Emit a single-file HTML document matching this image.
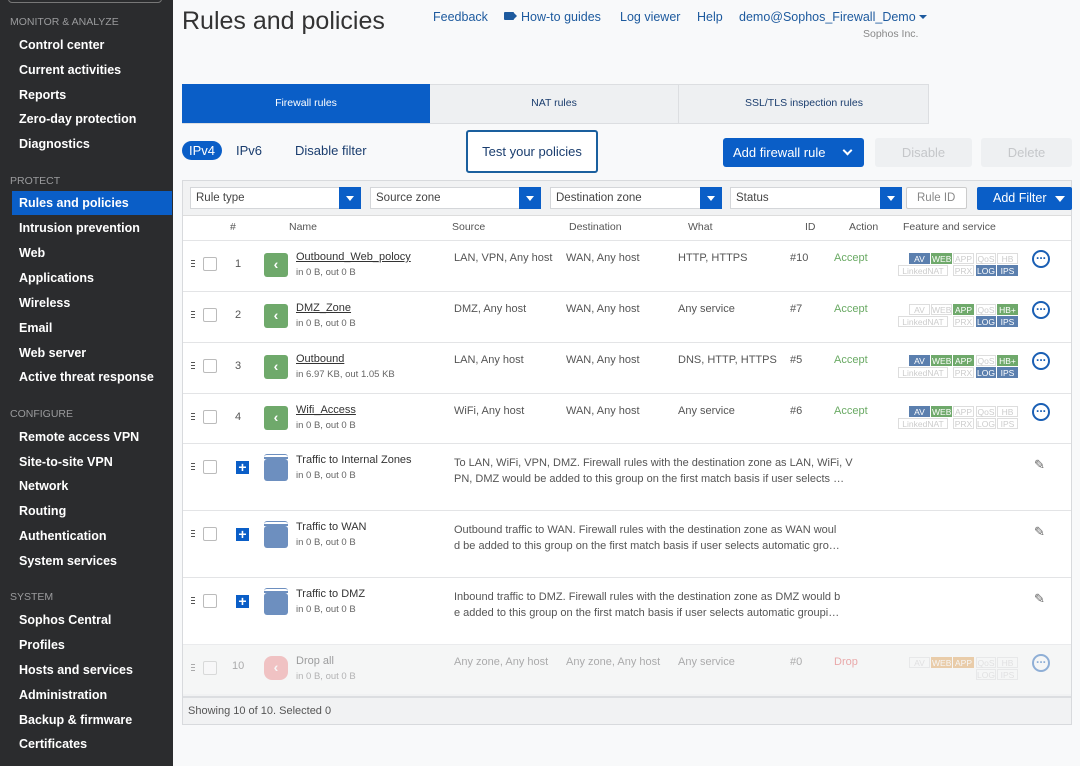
<!DOCTYPE html>
<html><head><meta charset="utf-8"><style>
*{box-sizing:border-box;margin:0;padding:0}
body{width:1080px;height:766px;overflow:hidden;background:#f8f9fa;font-family:"Liberation Sans",sans-serif;position:relative;color:#333}
.a{position:absolute;white-space:nowrap}
#sb{position:absolute;left:0;top:0;width:173px;height:766px;background:#2b2c2e}
.sh{position:absolute;left:10px;font-size:10.5px;color:#9a9b9d}
.si{position:absolute;left:19px;font-size:12.5px;color:#fff;font-weight:bold}
.tab{position:absolute;top:84px;height:39px;font-size:10.5px;text-align:center;line-height:38px}
.sel{position:absolute;top:187px;height:22px;background:#fff;border:1px solid #d4d6d9;font-size:11.5px;color:#444;padding-left:5px;line-height:21px}
.sel i{position:absolute;right:-1px;top:-1px;width:22px;height:22px;background:#0a5ec7}
.sel i:after{content:"";position:absolute;left:7px;top:9px;border:4px solid transparent;border-top:5px solid #fff}
.row{position:absolute;left:183px;width:888px;background:#fff;border-top:1px solid #e3e4e6}
.t{position:absolute;font-size:11px;color:#555;white-space:nowrap}
.cb{position:absolute;left:20px;width:14px;height:14px;border:1.5px solid #bbb;border-radius:2px;background:#fff}
.hd{position:absolute;left:8px;width:4px;height:7px;border-top:1.5px solid #555;border-bottom:1.5px solid #555}
.hd:after{content:"";position:absolute;left:0;top:1.5px;width:4px;height:1.5px;background:#555}
.ic{position:absolute;left:81px;width:24px;height:24px;background:#6fa96b;border-radius:3px;color:#fff;font-size:14px;text-align:center;line-height:23px;font-weight:bold}
.nm{position:absolute;left:113px;font-size:11px;color:#333;text-decoration:underline}
.sm{position:absolute;left:113px;font-size:9.5px;color:#666}
.acc{position:absolute;left:651px;font-size:11px;color:#6aaa64}
.b{position:absolute;height:11px;font-size:8.5px;line-height:10px;text-align:center;border:1px solid #ddd;color:#ccc}
.bl{background:#5b7fae;border-color:#5b7fae;color:#fff}
.gr{background:#6fa96b;border-color:#6fa96b;color:#fff}
.dots{position:absolute;left:849px;width:18px;height:18px;border:2px solid #1a5fb4;border-radius:50%;color:#1a5fb4;font-size:12px;line-height:7px;text-align:center;font-weight:bold}
.pl{position:absolute;left:53px;width:13px;height:13px;background:#0a5ec7;color:#fff;font-size:14px;line-height:12px;text-align:center;font-weight:bold}
.fo{position:absolute;left:81px;width:24px;height:22px;background:#6d8fbf;border-radius:3px}
.fo:before{content:"";position:absolute;left:0;top:-5px;width:24px;height:3px;border-top:1.5px solid #6d8fbf;border-radius:3px 3px 0 0}
.fo:after{content:"";position:absolute;left:0;top:-2px;width:24px;height:1.5px;background:#6d8fbf}
.pen{position:absolute;left:851px;font-size:13px;color:#666}
</style></head><body>
<div id="sb">
<div class="a" style="left:8px;top:-10px;width:154px;height:13px;border:1px solid #777;border-radius:4px"></div>
<div class="sh" style="top:16px">MONITOR &amp; ANALYZE</div>
<div class="si" style="top:38px">Control center</div>
<div class="si" style="top:63px">Current activities</div>
<div class="si" style="top:88px">Reports</div>
<div class="si" style="top:112px">Zero-day protection</div>
<div class="si" style="top:137px">Diagnostics</div>
<div class="sh" style="top:175px">PROTECT</div>
<div class="a" style="left:12px;top:191px;width:160px;height:24px;background:#0a5ec7"></div>
<div class="si" style="top:196px">Rules and policies</div>
<div class="si" style="top:221px">Intrusion prevention</div>
<div class="si" style="top:246px">Web</div>
<div class="si" style="top:271px">Applications</div>
<div class="si" style="top:296px">Wireless</div>
<div class="si" style="top:321px">Email</div>
<div class="si" style="top:346px">Web server</div>
<div class="si" style="top:370px">Active threat response</div>
<div class="sh" style="top:408px">CONFIGURE</div>
<div class="si" style="top:430px">Remote access VPN</div>
<div class="si" style="top:455px">Site-to-site VPN</div>
<div class="si" style="top:479px">Network</div>
<div class="si" style="top:504px">Routing</div>
<div class="si" style="top:529px">Authentication</div>
<div class="si" style="top:554px">System services</div>
<div class="sh" style="top:591px">SYSTEM</div>
<div class="si" style="top:613px">Sophos Central</div>
<div class="si" style="top:638px">Profiles</div>
<div class="si" style="top:663px">Hosts and services</div>
<div class="si" style="top:688px">Administration</div>
<div class="si" style="top:713px">Backup &amp; firmware</div>
<div class="si" style="top:737px">Certificates</div>
</div>

<div class="a" style="left:182px;top:7px;font-size:25px;color:#333">Rules and policies</div>
<div class="a" style="left:433px;top:10px;font-size:12.5px;color:#1d5a9e">Feedback</div>
<div class="a" style="left:504px;top:12px;width:10px;height:8px;background:#1d5a9e;border-radius:1px"></div>
<div class="a" style="left:513px;top:12px;border:4px solid transparent;border-right:4px solid #1d5a9e;transform:scaleX(-1)"></div>
<div class="a" style="left:521px;top:10px;font-size:12.5px;color:#1d5a9e">How-to guides</div>
<div class="a" style="left:620px;top:10px;font-size:12.5px;color:#1d5a9e">Log viewer</div>
<div class="a" style="left:697px;top:10px;font-size:12.5px;color:#1d5a9e">Help</div>
<div class="a" style="left:739px;top:10px;font-size:12.5px;color:#1d5a9e">demo@Sophos_Firewall_Demo</div>
<div class="a" style="left:919px;top:15px;border:4px solid transparent;border-top:4px solid #1d5a9e"></div>
<div class="a" style="left:863px;top:28px;font-size:10.5px;color:#888">Sophos Inc.</div>

<div class="a" style="left:182px;top:84px;width:747px;height:40px;background:#eef0f2;border:1px solid #dcdee1"></div>
<div class="tab" style="left:182px;width:248px;background:#0a5ec7;color:#fff">Firewall rules</div>
<div class="tab" style="left:430px;width:249px;color:#1a3d6e;border-right:1px solid #dcdee1">NAT rules</div>
<div class="tab" style="left:679px;width:250px;color:#1a3d6e">SSL/TLS inspection rules</div>

<div class="a" style="left:182px;top:141px;width:40px;height:19px;background:#0a5ec7;border-radius:10px;color:#fff;font-size:13px;line-height:19px;text-align:center">IPv4</div>
<div class="a" style="left:236px;top:143px;font-size:13px;color:#1a3d6e">IPv6</div>
<div class="a" style="left:295px;top:143px;font-size:13px;color:#1a3d6e">Disable filter</div>
<div class="a" style="left:466px;top:130px;width:132px;height:43px;border:2px solid #1a5f9e;border-radius:3px;background:#fff;font-size:13px;color:#1a3d6e;text-align:center;line-height:39px">Test your policies</div>
<div class="a" style="left:723px;top:138px;width:141px;height:29px;background:#0a5ec7;border-radius:3px;color:#fff;font-size:13px;line-height:29px;padding-left:10px">Add firewall rule</div>
<div class="a" style="left:844px;top:147px;width:7px;height:7px;border-right:2px solid #fff;border-bottom:2px solid #fff;transform:rotate(45deg)"></div>
<div class="a" style="left:875px;top:138px;width:97px;height:29px;background:#eef0f2;border-radius:3px;color:#c5c7ca;font-size:13px;line-height:29px;text-align:center">Disable</div>
<div class="a" style="left:981px;top:138px;width:91px;height:29px;background:#eef0f2;border-radius:3px;color:#c5c7ca;font-size:13px;line-height:29px;text-align:center">Delete</div>

<div class="a" style="left:182px;top:180px;width:890px;height:545px;border:1px solid #d8dadd;background:#f1f2f3"></div>
<div class="sel" style="left:190px;width:171px">Rule type<i></i></div>
<div class="sel" style="left:370px;width:171px">Source zone<i></i></div>
<div class="sel" style="left:550px;width:172px">Destination zone<i></i></div>
<div class="sel" style="left:730px;width:172px">Status<i></i></div>
<div class="a" style="left:906px;top:187px;width:61px;height:22px;border:1px solid #ccc;background:#fff;border-radius:2px;font-size:11.5px;color:#888;line-height:20px;padding-left:10px">Rule ID</div>
<div class="a" style="left:977px;top:187px;width:95px;height:23px;background:#0a5ec7;border-radius:2px;color:#fff;font-size:12.5px;line-height:23px;padding-left:16px">Add Filter</div>
<div class="a" style="left:1055px;top:196px;border:5px solid transparent;border-top:6px solid #fff"></div>

<div class="row" style="top:215px;height:25px;border-top:1px solid #ddd"></div>
<div class="t" style="left:230px;top:221px;font-size:10.5px">#</div>
<div class="t" style="left:289px;top:221px;font-size:10.5px">Name</div>
<div class="t" style="left:452px;top:221px;font-size:10.5px">Source</div>
<div class="t" style="left:569px;top:221px;font-size:10.5px">Destination</div>
<div class="t" style="left:688px;top:221px;font-size:10.5px">What</div>
<div class="t" style="left:805px;top:221px;font-size:10.5px">ID</div>
<div class="t" style="left:849px;top:221px;font-size:10.5px">Action</div>
<div class="t" style="left:903px;top:221px;font-size:10.5px">Feature and service</div>

<div class="row" style="top:240px;height:51px">
<div class="hd" style="top:19px"></div><div class="cb" style="top:16px"></div>
<div class="t" style="left:52px;top:17px">1</div><div class="ic" style="top:12px">&lsaquo;</div>
<div class="nm" style="top:10px">Outbound_Web_polocy</div><div class="sm" style="top:26px">in 0 B, out 0 B</div>
<div class="t" style="left:271px;top:11px">LAN, VPN, Any host</div><div class="t" style="left:383px;top:11px">WAN, Any host</div>
<div class="t" style="left:495px;top:11px">HTTP, HTTPS</div><div class="t" style="left:607px;top:11px">#10</div>
<div class="acc" style="top:11px">Accept</div>
<div class="b bl" style="left:726px;top:12px;width:21px">AV</div><div class="b gr" style="left:748px;top:12px;width:21px">WEB</div><div class="b" style="left:770px;top:12px;width:21px">APP</div><div class="b" style="left:793px;top:12px;width:20px">QoS</div><div class="b" style="left:814px;top:12px;width:21px">HB</div>
<div class="b" style="left:715px;top:24px;width:50px">LinkedNAT</div><div class="b" style="left:770px;top:24px;width:21px">PRX</div><div class="b bl" style="left:793px;top:24px;width:20px">LOG</div><div class="b bl" style="left:814px;top:24px;width:21px">IPS</div>
<div class="dots" style="top:9px">...</div>
</div>
<div class="row" style="top:291px;height:51px">
<div class="hd" style="top:19px"></div><div class="cb" style="top:16px"></div>
<div class="t" style="left:52px;top:17px">2</div><div class="ic" style="top:12px">&lsaquo;</div>
<div class="nm" style="top:10px">DMZ_Zone</div><div class="sm" style="top:26px">in 0 B, out 0 B</div>
<div class="t" style="left:271px;top:11px">DMZ, Any host</div><div class="t" style="left:383px;top:11px">WAN, Any host</div>
<div class="t" style="left:495px;top:11px">Any service</div><div class="t" style="left:607px;top:11px">#7</div>
<div class="acc" style="top:11px">Accept</div>
<div class="b" style="left:726px;top:12px;width:21px">AV</div><div class="b" style="left:748px;top:12px;width:21px">WEB</div><div class="b gr" style="left:770px;top:12px;width:21px">APP</div><div class="b" style="left:793px;top:12px;width:20px">QoS</div><div class="b gr" style="left:814px;top:12px;width:21px">HB+</div>
<div class="b" style="left:715px;top:24px;width:50px">LinkedNAT</div><div class="b" style="left:770px;top:24px;width:21px">PRX</div><div class="b bl" style="left:793px;top:24px;width:20px">LOG</div><div class="b bl" style="left:814px;top:24px;width:21px">IPS</div>
<div class="dots" style="top:9px">...</div>
</div>
<div class="row" style="top:342px;height:51px">
<div class="hd" style="top:19px"></div><div class="cb" style="top:16px"></div>
<div class="t" style="left:52px;top:17px">3</div><div class="ic" style="top:12px">&lsaquo;</div>
<div class="nm" style="top:10px">Outbound</div><div class="sm" style="top:26px">in 6.97 KB, out 1.05 KB</div>
<div class="t" style="left:271px;top:11px">LAN, Any host</div><div class="t" style="left:383px;top:11px">WAN, Any host</div>
<div class="t" style="left:495px;top:11px">DNS, HTTP, HTTPS</div><div class="t" style="left:607px;top:11px">#5</div>
<div class="acc" style="top:11px">Accept</div>
<div class="b bl" style="left:726px;top:12px;width:21px">AV</div><div class="b gr" style="left:748px;top:12px;width:21px">WEB</div><div class="b gr" style="left:770px;top:12px;width:21px">APP</div><div class="b" style="left:793px;top:12px;width:20px">QoS</div><div class="b gr" style="left:814px;top:12px;width:21px">HB+</div>
<div class="b" style="left:715px;top:24px;width:50px">LinkedNAT</div><div class="b" style="left:770px;top:24px;width:21px">PRX</div><div class="b bl" style="left:793px;top:24px;width:20px">LOG</div><div class="b bl" style="left:814px;top:24px;width:21px">IPS</div>
<div class="dots" style="top:9px">...</div>
</div>
<div class="row" style="top:393px;height:50px">
<div class="hd" style="top:19px"></div><div class="cb" style="top:16px"></div>
<div class="t" style="left:52px;top:17px">4</div><div class="ic" style="top:12px">&lsaquo;</div>
<div class="nm" style="top:10px">Wifi_Access</div><div class="sm" style="top:26px">in 0 B, out 0 B</div>
<div class="t" style="left:271px;top:11px">WiFi, Any host</div><div class="t" style="left:383px;top:11px">WAN, Any host</div>
<div class="t" style="left:495px;top:11px">Any service</div><div class="t" style="left:607px;top:11px">#6</div>
<div class="acc" style="top:11px">Accept</div>
<div class="b bl" style="left:726px;top:12px;width:21px">AV</div><div class="b gr" style="left:748px;top:12px;width:21px">WEB</div><div class="b" style="left:770px;top:12px;width:21px">APP</div><div class="b" style="left:793px;top:12px;width:20px">QoS</div><div class="b" style="left:814px;top:12px;width:21px">HB</div>
<div class="b" style="left:715px;top:24px;width:50px">LinkedNAT</div><div class="b" style="left:770px;top:24px;width:21px">PRX</div><div class="b" style="left:793px;top:24px;width:20px">LOG</div><div class="b" style="left:814px;top:24px;width:21px">IPS</div>
<div class="dots" style="top:9px">...</div>
</div>

<div class="row" style="top:443px;height:67px">
<div class="hd" style="top:19px"></div><div class="cb" style="top:16px"></div><div class="pl" style="top:17px">+</div>
<div class="fo" style="top:15px"></div>
<div class="t" style="left:113px;top:10px;color:#333">Traffic to Internal Zones</div><div class="sm" style="top:26px">in 0 B, out 0 B</div>
<div class="t" style="left:271px;top:11px;line-height:16px">To LAN, WiFi, VPN, DMZ. Firewall rules with the destination zone as LAN, WiFi, V<br>PN, DMZ would be added to this group on the first match basis if user selects …</div>
<div class="pen" style="top:13px">✎</div>
</div>
<div class="row" style="top:510px;height:67px">
<div class="hd" style="top:19px"></div><div class="cb" style="top:16px"></div><div class="pl" style="top:17px">+</div>
<div class="fo" style="top:15px"></div>
<div class="t" style="left:113px;top:10px;color:#333">Traffic to WAN</div><div class="sm" style="top:26px">in 0 B, out 0 B</div>
<div class="t" style="left:271px;top:11px;line-height:16px">Outbound traffic to WAN. Firewall rules with the destination zone as WAN woul<br>d be added to this group on the first match basis if user selects automatic gro…</div>
<div class="pen" style="top:13px">✎</div>
</div>
<div class="row" style="top:577px;height:67px">
<div class="hd" style="top:19px"></div><div class="cb" style="top:16px"></div><div class="pl" style="top:17px">+</div>
<div class="fo" style="top:15px"></div>
<div class="t" style="left:113px;top:10px;color:#333">Traffic to DMZ</div><div class="sm" style="top:26px">in 0 B, out 0 B</div>
<div class="t" style="left:271px;top:11px;line-height:16px">Inbound traffic to DMZ. Firewall rules with the destination zone as DMZ would b<br>e added to this group on the first match basis if user selects automatic groupi…</div>
<div class="pen" style="top:13px">✎</div>
</div>
<div class="row" style="top:644px;height:50px;background:#fbfbfb;opacity:.45">
<div class="hd" style="top:19px"></div><div class="cb" style="top:16px"></div>
<div class="t" style="left:49px;top:15px">10</div>
<div class="ic" style="top:11px;background:#f08a8a;border-radius:8px">&lsaquo;</div>
<div class="t" style="left:113px;top:10px;color:#333">Drop all</div><div class="sm" style="top:26px">in 0 B, out 0 B</div>
<div class="t" style="left:271px;top:11px">Any zone, Any host</div><div class="t" style="left:383px;top:11px">Any zone, Any host</div>
<div class="t" style="left:495px;top:11px">Any service</div><div class="t" style="left:607px;top:11px">#0</div>
<div class="acc" style="top:11px;color:#e05050">Drop</div>
<div class="b" style="left:726px;top:12px;width:21px">AV</div><div class="b" style="left:748px;top:12px;width:21px;background:#e0a050;border-color:#e0a050;color:#fff">WEB</div><div class="b" style="left:770px;top:12px;width:21px;background:#e0a050;border-color:#e0a050;color:#fff">APP</div><div class="b" style="left:793px;top:12px;width:20px">QoS</div><div class="b" style="left:814px;top:12px;width:21px">HB</div>
<div class="b" style="left:793px;top:24px;width:20px">LOG</div><div class="b" style="left:814px;top:24px;width:21px">IPS</div>
<div class="dots" style="top:9px">...</div>
</div>
<div class="a" style="left:183px;top:696px;width:888px;height:28px;background:#f1f2f3;border-top:2px solid #dcdee1;font-size:11px;color:#555;line-height:26px;padding-left:5px">Showing 10 of 10. Selected 0</div>
</body></html>
